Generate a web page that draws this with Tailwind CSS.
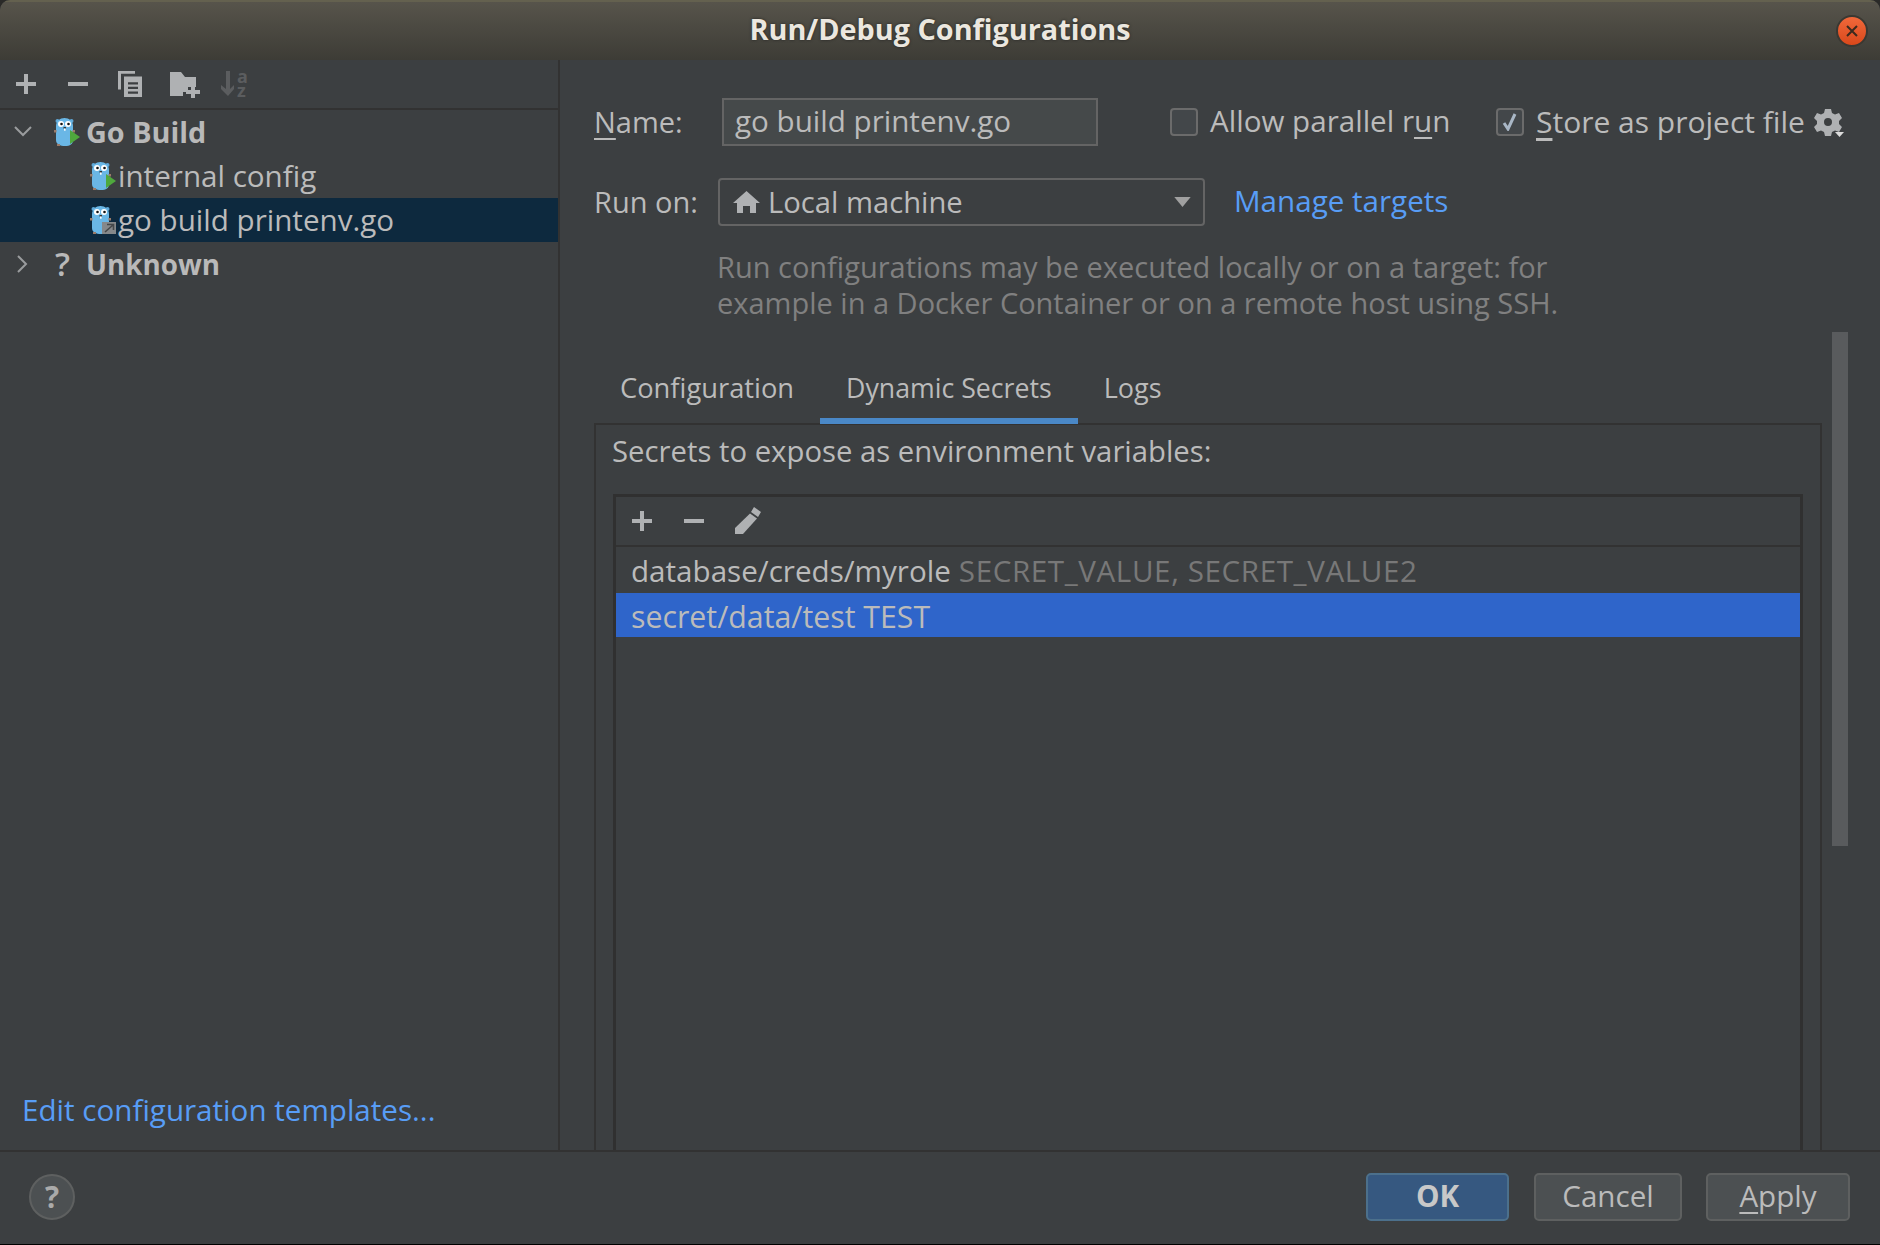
<!DOCTYPE html>
<html lang="en">
<head>
  <meta charset="UTF-8" />
  <meta name="viewport" content="width=device-width, initial-scale=1.0"/>
  <title>Run/Debug Configurations</title>
  <script src="https://cdn.jsdelivr.net/npm/@tailwindcss/browser@4"></script>
</head>
<body class="bg-[#2a2a28] font-['Open_Sans',sans-serif] text-[29.6px] text-[#bbbbbb]">
  <svg class="hidden">
    <symbol id="gopher" viewBox="0 0 26 28">
      <circle cx="3.500" cy="3" r="2" fill="#5fa8d8"/>
      <circle cx="17.500" cy="3" r="2" fill="#5fa8d8"/>
      <path d="M2 8c0-5 4-8 8.500-8S19 3 19 8v14c0 4-3 6-8 6s-9-2-9-6z" fill="#6ab7e6"/>
      <rect x="0" y="12" width="2.500" height="2.500" fill="#9a7a68"/>
      <rect x="18.500" y="12" width="2.500" height="2.500" fill="#9a7a68"/>
      <rect x="3" y="26" width="3" height="2" fill="#9a7a68"/>
      <circle cx="7" cy="6" r="3" fill="#fff"/>
      <circle cx="14" cy="6" r="3" fill="#fff"/>
      <circle cx="7.500" cy="6" r="1.300" fill="#111"/>
      <circle cx="14.500" cy="6" r="1.300" fill="#111"/>
      <rect x="9.500" y="9" width="2.500" height="1.600" fill="#333"/>
      <rect x="10" y="10.500" width="1.600" height="2.200" fill="#fff"/>
    </symbol>
    <symbol id="plus" viewBox="0 0 20 20"><path d="M8 0h4v8h8v4h-8v8H8v-8H0V8h8z" fill="currentColor"/></symbol>
  </svg>

  <div class="w-[1880px] h-[1245px] flex flex-col overflow-hidden rounded-t-[10px] bg-[#3c3f41] border-b border-black">
    <!-- title bar -->
    <div class="relative h-[60px] shrink-0 flex items-center justify-center pb-[4px] bg-gradient-to-b from-[#57544b] to-[#3d3c36] border-t-2 border-[#64614f]">
      <span class="font-bold text-[#ebe7df] text-[28.800px] [text-shadow:0_0_3px_#222]">Run/Debug Configurations</span>
      <div class="absolute right-[12px] top-[13px] w-[32px] h-[32px] rounded-full bg-gradient-to-b from-[#f0683a] to-[#d9481a] border-2 border-[#3a3832] flex items-center justify-center">
        <svg width="14" height="14" viewBox="0 0 14 14"><path d="M2 2l10 10M12 2L2 12" stroke="#3a2a1e" stroke-width="2"/></svg>
      </div>
    </div>

    <div class="flex-1 flex min-h-0">
      <!-- left pane -->
      <div class="w-[560px] shrink-0 flex flex-col border-r-2 border-[#323232]">
        <div class="h-[50px] shrink-0 flex items-center border-b-2 border-[#323232] pl-[16px] text-[#afb1b3]">
          <svg class="w-[20px] h-[20px]"><use href="#plus"/></svg>
          <svg class="ml-[32px]" width="20" height="20" viewBox="0 0 20 20"><rect y="8" width="20" height="4" fill="currentColor"/></svg>
          <svg class="ml-[30px]" width="24" height="26" viewBox="0 0 24 28" preserveAspectRatio="none" fill="currentColor"><path d="M0 0h17v3H3v17H0z"/><path fill-rule="evenodd" d="M6 6h18v22H6zM10 12v2.500h10V12zM10 17v2.500h10V17zM10 22v2.500h10V22z"/></svg>
          <svg class="ml-[28px]" width="30" height="28" viewBox="0 0 30 28" fill="currentColor"><path d="M0 2h11l4 5h11v10h-8v5h-5v4H0z"/><path d="M21 15h4v5h5v4h-5v4h-4v-4h-5v-4h5z"/></svg>
          <div class="ml-[21px] flex items-center text-[#5b5d5f]">
            <svg width="14" height="26" viewBox="0 0 14 26" fill="currentColor"><path d="M5 0h4v18l4-4v4l-6 7-7-7v-4l5 4z"/></svg>
            <div class="ml-[2px] -mt-[2px] flex flex-col font-bold text-[18px] leading-[14px]"><span>a</span><span>z</span></div>
          </div>
        </div>

        <div class="h-[44px] flex items-center font-bold text-[#b9b9b9]">
          <svg class="ml-[14px] w-[18px] h-[12px]" viewBox="0 0 18 12" fill="none" stroke="#9a9c9e" stroke-width="2"><path d="M1 1l8 8 8-8"/></svg>
          <svg class="ml-[22px] w-[26px] h-[28px]" viewBox="0 0 26 28"><use href="#gopher"/><path d="M16 12l10 7-10 7z" fill="#4fa83d"/></svg>
          <span class="ml-[6px] text-[28.800px]">Go Build</span>
        </div>
        <div class="h-[44px] flex items-center">
          <svg class="ml-[90px] w-[26px] h-[28px]" viewBox="0 0 26 28"><use href="#gopher"/><path d="M16 12l10 7-10 7z" fill="#4fa83d"/></svg>
          <span class="ml-[2px] pt-[1px]">internal config</span>
        </div>
        <div class="h-[44px] flex items-center bg-[#0d293e]">
          <svg class="ml-[90px] w-[26px] h-[28px]" viewBox="0 0 26 28"><use href="#gopher"/><rect x="12" y="16" width="14" height="12" fill="#85888a"/><path d="M15 26l8-7M17 18.500h6.500V24" stroke="#45484a" stroke-width="1.600" fill="none"/></svg>
          <span class="ml-[2px] pt-[1px]">go build printenv.go</span>
        </div>
        <div class="h-[44px] flex items-center font-bold text-[#b9b9b9]">
          <svg class="ml-[17px] w-[12px] h-[18px]" viewBox="0 0 12 18" fill="none" stroke="#9a9c9e" stroke-width="2"><path d="M1 1l8 8-8 8"/></svg>
          <span class="ml-[26px] w-[31px] font-semibold text-[33px]">?</span>
          <span class="pt-[1px] text-[27.800px]">Unknown</span>
        </div>

        <a class="mt-auto pb-[22px] pl-[22px] leading-[36px] text-[#589df6]">Edit configuration templates...</a>
      </div>

      <!-- right pane -->
      <div class="relative flex-1 min-w-0 flex flex-col pt-[38px] pl-[34px]">
        <div class="h-[48px] shrink-0 flex items-center">
          <span class="w-[128px] pb-[1px] text-[29px]"><u class="underline-offset-[5px]">N</u>ame:</span>
          <div class="w-[376px] h-[48px] flex items-center bg-[#45494a] border-2 border-[#646464] pl-[11px] pb-[1px]">go build printenv.go</div>
          <div class="ml-[72px] w-[28px] h-[28px] rounded-[4px] border-2 border-[#6b6b6b] bg-[#43474a]"></div>
          <span class="ml-[12px] w-[274px] pb-[1px]">Allow parallel r<u class="underline-offset-[5px]">u</u>n</span>
          <div class="ml-[12px] w-[28px] h-[28px] rounded-[4px] border-2 border-[#6b6b6b] bg-[#43474a] flex items-center justify-center">
            <svg width="16" height="18" viewBox="0 0 16 18" fill="none" stroke="#a9b7c6" stroke-width="3"><path d="M2 10l4 6 7-15"/></svg>
          </div>
          <span class="ml-[12px] pb-[1px] text-[30px]"><u class="underline-offset-[5px]">S</u>tore as project file</span>
          <svg class="ml-[9px]" width="30" height="32" viewBox="0 0 30 32" fill="#afb1b3"><path fill-rule="evenodd" d="M11 3h6l1 4 3 1.500 4-1.500 3 5-3 3v3l3 3-3 5-4-1.500-3 1.500-1 4h-6l-1-4-3-1.500-4 1.500-3-5 3-3v-3l-3-3 3-5 4 1.500 3-1.500zM14 12a4 4 0 1 0 0 8 4 4 0 0 0 0-8z"/><path d="M21 26h9l-4.500 5z" fill="#dcdcdc"/></svg>
        </div>

        <div class="mt-[32px] h-[48px] shrink-0 flex items-center">
          <span class="w-[124px] pb-[1px] text-[29px]">Run on:</span>
          <div class="w-[487px] h-[48px] flex items-center border-2 border-[#646464] rounded-[4px] pl-[13px]">
            <svg width="27" height="22" viewBox="0 0 27 22" fill="#afb1b3"><path d="M13.500 0L0 12h4v10h6v-7h7v7h6V12h4z"/></svg>
            <span class="ml-[8px] pt-[1px] text-[29.200px]">Local machine</span>
            <svg class="ml-auto mr-[12px]" width="17" height="10" viewBox="0 0 18 11" fill="#a0a0a0"><path d="M0 0h18l-9 11z"/></svg>
          </div>
          <a class="ml-[29px] pb-[1px] text-[#589df6]">Manage targets</a>
        </div>

        <p class="mt-[23px] ml-[123px] text-[29px] leading-[36px] text-[#808080]">Run configurations may be executed locally or on a target: for<br>example in a Docker Container or on a remote host using SSH.</p>

        <div class="mt-[36px] h-[67px] shrink-0 flex relative z-10 text-[#bbbbbb]">
          <div class="px-[26px] pt-[13px] text-[27.300px] leading-[36px]">Configuration</div>
          <div class="px-[26px] pt-[13px] text-[26.700px] leading-[36px] border-b-[6px] border-[#4a88c7]">Dynamic Secrets</div>
          <div class="px-[26px] pt-[13px] text-[27px] leading-[36px]">Logs</div>
        </div>

        <div class="-mt-[1px] w-[1228px] flex-1 min-h-0 flex flex-col border-x-2 border-t-2 border-[#323232] pt-[8px]">
          <div class="pl-[16px] text-[29.300px] leading-[36px]">Secrets to expose as environment variables:</div>
          <div class="mt-[25px] mx-[17px] flex-1 flex flex-col border-x-[3px] border-t-[3px] border-[#303030]">
            <div class="h-[50px] shrink-0 flex items-center border-b-2 border-[#323232] pl-[16px] text-[#afb1b3]">
              <svg class="w-[20px] h-[20px]"><use href="#plus"/></svg>
              <svg class="ml-[32px]" width="20" height="20" viewBox="0 0 20 20"><rect y="8" width="20" height="4" fill="currentColor"/></svg>
              <svg class="ml-[30px]" width="28" height="28" viewBox="0 0 28 28" fill="currentColor"><path d="M20 0l7 5-3 5-7-5z"/><path d="M16 6.500l7 5L9 27H1v-6z"/></svg>
            </div>
            <div class="h-[46px] shrink-0 flex items-center pl-[15px] pt-[3px]">database/creds/myrole<span class="ml-[8px] tracking-[0.6px] text-[#787878]">SECRET_VALUE, SECRET_VALUE2</span></div>
            <div class="h-[44px] shrink-0 flex items-center pl-[15px] pt-[3px] text-[30.300px] bg-[#2f65ca]">secret/data/test TEST</div>
          </div>
        </div>

        <!-- scrollbar -->
        <div class="absolute left-[1272px] top-[272px] w-[16px] h-[514px] bg-[#595b5d]"></div>
      </div>
    </div>

    <!-- footer -->
    <div class="h-[94px] shrink-0 flex items-center border-t-2 border-[#323232] pr-[30px] pl-[29px] pb-[2px]">
      <div class="w-[46px] h-[46px] rounded-full bg-[#4c5052] border-2 border-[#5e6060] flex items-center justify-center font-bold text-[#aaaaaa]">?</div>
      <div class="ml-auto w-[143px] h-[48px] rounded-[5px] bg-[#365880] border-2 border-[#4c708c] flex items-center justify-center pb-[1px] font-bold text-[#c8c8c8]">OK</div>
      <div class="ml-[25px] w-[148px] h-[48px] rounded-[5px] bg-[#4c5052] border-2 border-[#5e6060] flex items-center justify-center pb-[1px]">Cancel</div>
      <div class="ml-[24px] w-[144px] h-[48px] rounded-[5px] bg-[#4c5052] border-2 border-[#5e6060] flex items-center justify-center pb-[1px]"><span><u class="underline-offset-[5px]">A</u>pply</span></div>
    </div>
  </div>
</body>
</html>
